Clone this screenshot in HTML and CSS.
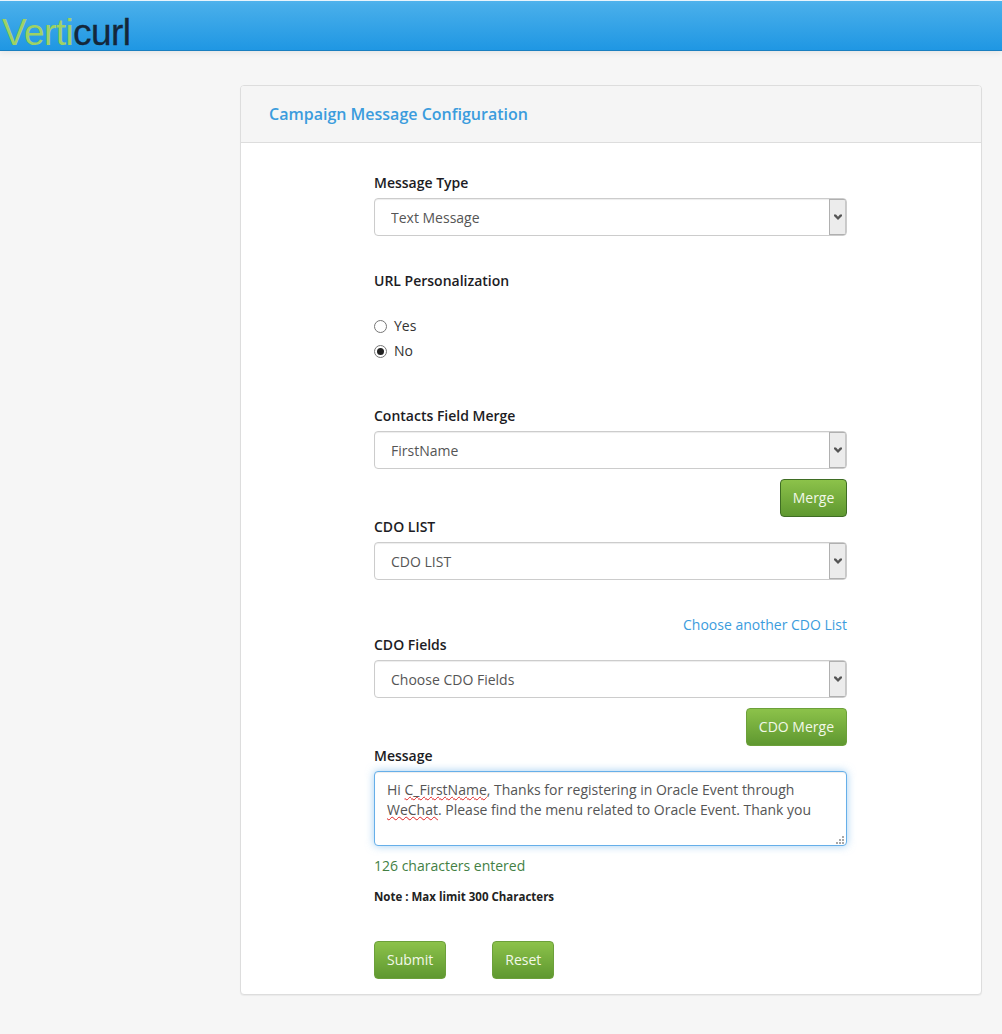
FILE: index.html
```html
<!DOCTYPE html>
<html lang="en">
<head>
<meta charset="utf-8">
<title>Campaign Message Configuration</title>
<link rel="stylesheet" href="styles.css">
</head>
<body>
<header class="topbar">
  <div class="logo"><span class="logo-light">Verti</span><span class="logo-dark">curl</span></div>
</header>
<main class="content">
  <section class="panel">
    <div class="panel-head"><h1>Campaign Message Configuration</h1></div>
    <form class="panel-body">
      <label class="field-label">Message Type</label>
      <div class="select">
        <select><option>Text Message</option></select>
        <span class="select-arrow"><svg width="8" height="6" viewBox="0 0 8 6"><path d="M0 0.5 L2 0.5 L4 2.8 L6 0.5 L8 0.5 L8 2 L4 6 L0 2 Z" fill="#555"/></svg></span>
      </div>

      <label class="field-label gap-35">URL Personalization</label>
      <div class="radios">
        <label class="radio"><span class="dot"></span>Yes</label>
        <label class="radio"><span class="dot on"></span>No</label>
      </div>

      <label class="field-label gap-45">Contacts Field Merge</label>
      <div class="select">
        <select><option>FirstName</option></select>
        <span class="select-arrow"><svg width="8" height="6" viewBox="0 0 8 6"><path d="M0 0.5 L2 0.5 L4 2.8 L6 0.5 L8 0.5 L8 2 L4 6 L0 2 Z" fill="#555"/></svg></span>
      </div>
      <div class="actions-right"><button type="button" class="btn btn-dark">Merge</button></div>

      <label class="field-label">CDO LIST</label>
      <div class="select">
        <select><option>CDO LIST</option></select>
        <span class="select-arrow"><svg width="8" height="6" viewBox="0 0 8 6"><path d="M0 0.5 L2 0.5 L4 2.8 L6 0.5 L8 0.5 L8 2 L4 6 L0 2 Z" fill="#555"/></svg></span>
      </div>

      <div class="link-row"><a href="#">Choose another CDO List</a></div>

      <label class="field-label">CDO Fields</label>
      <div class="select">
        <select><option>Choose CDO Fields</option></select>
        <span class="select-arrow"><svg width="8" height="6" viewBox="0 0 8 6"><path d="M0 0.5 L2 0.5 L4 2.8 L6 0.5 L8 0.5 L8 2 L4 6 L0 2 Z" fill="#555"/></svg></span>
      </div>
      <div class="actions-right"><button type="button" class="btn">CDO Merge</button></div>

      <label class="field-label">Message</label>
      <div class="textarea">Hi <span class="typo">C_FirstName</span>, Thanks for registering in Oracle Event through <span class="typo">WeChat</span>. Please find the menu related to Oracle Event. Thank you
        <svg class="grip" width="9" height="9" viewBox="0 0 9 9"><path d="M6 0h2v2H6zM3 3h2v2H3zM6 3h2v2H6zM0 6h2v2H0zM3 6h2v2H3zM6 6h2v2H6z" fill="#a8a8a8"/></svg>
      </div>

      <p class="count">126 characters entered</p>
      <p class="note">Note : Max limit 300 Characters</p>

      <div class="actions">
        <button type="button" class="btn">Submit</button>
        <button type="button" class="btn">Reset</button>
      </div>
    </form>
  </section>
</main>
</body>
</html>
```

FILE: styles.css
```css
* { box-sizing: border-box; }

html, body { margin: 0; padding: 0; }

body {
  height: 1034px;
  overflow: hidden;
  background: #f6f6f6;
  color: #555;
  font-family: "Open Sans", "Liberation Sans", sans-serif;
  font-size: 14px;
  line-height: 20px;
}

.topbar {
  height: 51px;
  padding: 0 0 0 2px;
  background: linear-gradient(to bottom, #4fb2ec 1px, #48aeea 4px, #1f97e3 100%);
  border-top: 1px solid #e8f4fc;
  border-bottom: 1px solid #1a7fc0;
  box-shadow: 0 2px 6px rgba(0, 0, 0, 0.07);
}

.logo {
  font-family: "Liberation Sans", Arial, sans-serif;
  font-size: 37px;
  line-height: 44px;
  letter-spacing: -0.6px;
  padding-top: 10px;
  height: 49px;
  overflow: visible;
}

.logo-light { color: #9ed264; }
.logo-dark { color: #14273a; -webkit-text-stroke: 0.3px #14273a; }

.content { padding: 34px 20px 0 240px; }

.panel {
  width: 742px;
  height: 910px;
  background: #fff;
  border: 1px solid #ddd;
  border-radius: 4px;
  box-shadow: 0 1px 1px rgba(0, 0, 0, 0.05);
}

.panel-head {
  height: 57px;
  padding: 0 28px;
  display: flex;
  align-items: center;
  background: #f5f5f5;
  border-bottom: 1px solid #ddd;
  border-radius: 3px 3px 0 0;
}

.panel-head h1 {
  margin: 0;
  color: #3b9cdd;
  font-size: 16px;
  font-weight: 600;
  line-height: 20px;
}

.panel-body {
  width: 473px;
  margin-left: 133px;
  padding-top: 30px;
}

.field-label {
  display: block;
  margin-bottom: 5px;
  color: #1c1c24;
  font-weight: 600;
}

.gap-35 { margin-top: 35px; }
.gap-45 { margin-top: 45px; }

.select {
  position: relative;
  height: 38px;
}

.select select {
  display: block;
  width: 100%;
  height: 38px;
  padding: 2px 16px 0;
  appearance: none;
  background: #fff;
  border: 1px solid #ccc;
  border-radius: 4px;
  box-shadow: inset 0 1px 1px rgba(0, 0, 0, 0.075);
  color: #555;
  font: inherit;
}

.select-arrow {
  position: absolute;
  top: 1px;
  right: 1px;
  width: 17px;
  height: 36px;
  display: flex;
  align-items: center;
  justify-content: center;
  background: #ececec;
  border: 1px solid #b0b0b0;
  border-right-color: #c8c8c8;
  border-radius: 0 2px 2px 0;
}

.radios {
  display: flex;
  flex-direction: column;
  gap: 5px;
  margin-top: 25px;
}

.radio {
  display: flex;
  align-items: center;
  height: 20px;
  color: #333;
}

.dot {
  width: 13px;
  height: 13px;
  margin-right: 7px;
  display: flex;
  align-items: center;
  justify-content: center;
  background: #fff;
  border: 1px solid #767676;
  border-radius: 50%;
}

.dot.on::after {
  content: "";
  width: 7px;
  height: 7px;
  background: #222;
  border-radius: 50%;
}

.actions-right {
  display: flex;
  justify-content: flex-end;
  margin-top: 10px;
}

.btn {
  height: 38px;
  padding: 0 12px;
  background: linear-gradient(to bottom, #8cc24a 0%, #5f9830 100%);
  border: 1px solid #6ca03a;
  border-radius: 4px;
  color: #f2f8e8;
  font: inherit;
  cursor: pointer;
}

.btn-dark { width: 67px; padding: 0; border-color: #3f6d24; }

.link-row {
  margin-top: 35px;
  text-align: right;
}

.link-row a {
  color: #3b9cdd;
  text-decoration: none;
}

.textarea {
  position: relative;
  height: 75px;
  padding: 8px 12px;
  background: #fff;
  border: 1px solid #66afe9;
  border-radius: 4px;
  box-shadow: inset 0 1px 1px rgba(0, 0, 0, 0.075), 0 0 8px rgba(102, 175, 233, 0.6);
  color: #555;
}

.grip {
  position: absolute;
  right: 1px;
  bottom: 0;
}

.typo {
  text-decoration: underline wavy #d22;
  text-decoration-thickness: 1px;
  text-underline-offset: 1px;
}

.count {
  margin: 10px 0 0;
  color: #437f44;
}

.note {
  margin: 11px 0 0;
  color: #222;
  font-size: 11.5px;
  font-weight: 700;
}

.actions {
  display: flex;
  gap: 46px;
  margin-top: 34px;
}
```
